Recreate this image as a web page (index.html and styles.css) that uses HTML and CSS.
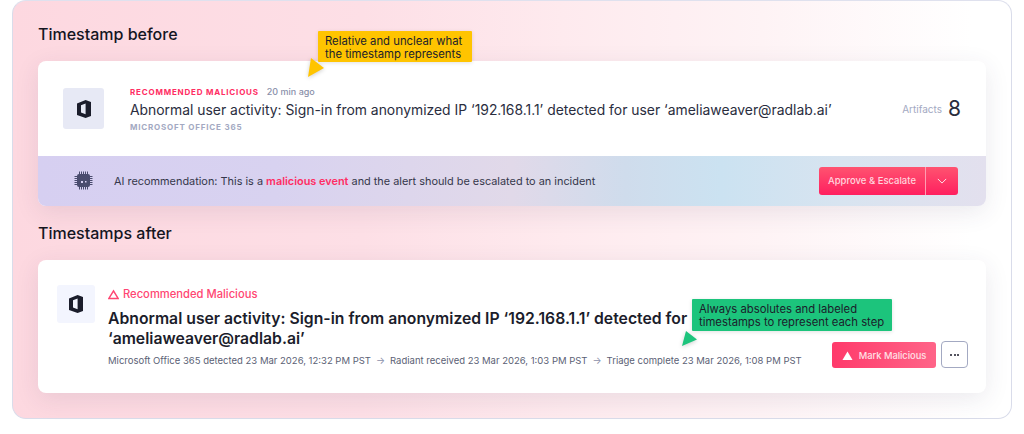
FILE: index.html
```html
<!DOCTYPE html>
<html lang="en">
<head>
    <meta charset="UTF-8">
    <title>Timestamps before and after</title>
    <link rel="stylesheet" href="styles.css">
</head>
<body>
    <div class="panel">
        <h2 class="section-title first">Timestamp before</h2>

        <div class="card">
            <div class="alert-top">
                <div class="logo-box">
                    <svg class="office" viewBox="0 0 14 18"><path fill-rule="evenodd" d="M8.6 0L14 1.9V16.1L8.6 18L0 15V3.4ZM8.6 3.4L4 5.2V12.4L8.6 14.3Z"/></svg>
                </div>
                <div class="alert-text">
                    <div class="status-row">
                        <span class="status-caps">RECOMMENDED MALICIOUS</span>
                        <span class="time-ago">20 min ago</span>
                    </div>
                    <div class="alert-title">Abnormal user activity: Sign-in from anonymized IP ‘192.168.1.1’ detected for user ‘ameliaweaver@radlab.ai’</div>
                    <div class="source-caps">MICROSOFT OFFICE 365</div>
                </div>
                <div class="artifacts">
                    <span class="artifacts-label">Artifacts</span>
                    <span class="artifacts-count">8</span>
                </div>
            </div>
            <div class="ai-strip">
                <svg class="chip" viewBox="0 0 20 20">
                    <rect x="3" y="3" width="13" height="13" rx="2"/>
                    <path class="chip-pins" d="M5.5 0.5V3M7.5 0.5V3M9.5 0.5V3M11.5 0.5V3M13.5 0.5V3M5.5 16V18.5M7.5 16V18.5M9.5 16V18.5M11.5 16V18.5M13.5 16V18.5M0.5 5.5H3M0.5 7.5H3M0.5 9.5H3M0.5 11.5H3M0.5 13.5H3M16 5.5H18.5M16 7.5H18.5M16 9.5H18.5M16 11.5H18.5M16 13.5H18.5"/>
                    <rect class="chip-dot" x="7" y="10" width="2" height="2"/>
                    <rect class="chip-dot" x="11" y="10" width="1.5" height="1.5"/>
                </svg>
                <p class="ai-text">AI recommendation: This is a <span class="hot">malicious event</span> and the alert should be escalated to an incident</p>
                <div class="split-button">
                    <span class="split-label">Approve &amp; Escalate</span>
                    <span class="split-arrow">
                        <svg class="chevron" viewBox="0 0 12 7"><path d="M1 1L6 6L11 1"/></svg>
                    </span>
                </div>
            </div>
        </div>

        <h2 class="section-title second">Timestamps after</h2>

        <div class="card card-after">
            <div class="logo-box small">
                <svg class="office" viewBox="0 0 14 18"><path fill-rule="evenodd" d="M8.6 0L14 1.9V16.1L8.6 18L0 15V3.4ZM8.6 3.4L4 5.2V12.4L8.6 14.3Z"/></svg>
            </div>
            <div class="after-text">
                <div class="after-status">
                    <svg class="warn" viewBox="0 0 12 11"><path d="M6 1.5L11 9.8H1Z"/></svg>
                    Recommended Malicious
                </div>
                <div class="after-title">Abnormal user activity: Sign-in from anonymized IP ‘192.168.1.1’ detected for ‘ameliaweaver@radlab.ai’</div>
                <div class="steps">
                    <span>Microsoft Office 365 detected 23 Mar 2026, 12:32 PM PST</span>
                    <span class="step-arrow">→</span>
                    <span>Radiant received 23 Mar 2026, 1:03 PM PST</span>
                    <span class="step-arrow">→</span>
                    <span>Triage complete 23 Mar 2026, 1:08 PM PST</span>
                </div>
            </div>
            <div class="actions">
                <div class="mark-button">
                    <svg class="warn-solid" viewBox="0 0 12 11"><path d="M6 1L11.5 10.5H0.5Z"/></svg>
                    Mark Malicious
                </div>
                <div class="more-button">
                    <i></i><i></i><i></i>
                </div>
            </div>
        </div>

        <!-- annotations on top of the cards -->
        <div class="note note-yellow">Relative and unclear what<br>the timestamp represents</div>
        <svg class="pointer pointer-yellow" viewBox="0 0 18 21"><path d="M4 1L17 11L1 20Z"/></svg>
        <div class="note note-green">Always absolutes and labeled<br>timestamps to represent each step</div>
        <svg class="pointer pointer-green" viewBox="0 0 18 18"><path d="M5 1L16 9.5L1 16Z"/></svg>
    </div>
</body>
</html>
```

FILE: styles.css
```css
:root {
    --dark: #1f2233;
    --hot: #ff2d63;
    --muted: #8a90aa;
    --light-muted: #a3a9c2;
}

* {
    margin: 0;
    padding: 0;
    box-sizing: border-box;
}

body {
    width: 1024px;
    height: 434px;
    overflow: hidden;
    background-color: white;
    font-family: 'Inter', sans-serif;
    color: var(--dark);
}

.panel {
    position: relative;
    width: 1000px;
    height: 419px;
    margin-left: 12px;
    padding: 0 25px 0 25px;
    border: 1px solid #d9dcea;
    border-top-color: #dfe1ee;
    border-radius: 14px;
    background: linear-gradient(90deg, #fdd8e0 0%, #fddfe6 35%, #feeaee 55%, #fef3f5 75%, #ffffff 96%);
}

.section-title {
    font-size: 16px;
    line-height: 20px;
    font-weight: 500;
    color: #14151f;
}

.section-title.first {
    padding-top: 23px;
    margin-bottom: 17px;
}

.section-title.second {
    margin-top: 17px;
    margin-bottom: 17px;
}

.card {
    background-color: white;
    border-radius: 8px;
    overflow: hidden;
    box-shadow: 0 6px 24px rgba(60, 50, 90, 0.1);
}

.alert-top {
    display: flex;
    align-items: center;
    height: 95px;
    padding: 0 25px;
}

.logo-box {
    width: 41px;
    height: 41px;
    flex-shrink: 0;
    display: flex;
    justify-content: center;
    align-items: center;
    border-radius: 3px;
    background-color: #e7e9f5;
    margin-right: 26px;
}

.logo-box.small {
    width: 38px;
    height: 38px;
    background-color: #f3f5fe;
    margin-right: 13px;
}

.office {
    width: 14px;
    height: 18px;
    fill: #1b1d2b;
}

.alert-text {
    flex: 1;
    min-width: 0;
}

.status-row {
    display: flex;
    align-items: center;
    gap: 8px;
    height: 14px;
}

.status-caps {
    font-size: 8px;
    font-weight: 700;
    letter-spacing: 0.8px;
    color: var(--hot);
}

.time-ago {
    font-size: 9px;
    font-weight: 500;
    color: var(--muted);
}

.alert-title {
    font-size: 13.9px;
    line-height: 22px;
    white-space: nowrap;
    color: #2a2d3e;
}

.source-caps {
    font-size: 8px;
    line-height: 12px;
    font-weight: 700;
    letter-spacing: 0.8px;
    color: var(--light-muted);
}

.artifacts {
    display: flex;
    align-items: center;
    gap: 6px;
}

.artifacts-label {
    font-size: 10px;
    color: var(--light-muted);
}

.artifacts-count {
    font-size: 21px;
    color: #2a2d3e;
}

.ai-strip {
    display: flex;
    align-items: center;
    height: 50px;
    padding: 0 28px 0 36px;
    background: linear-gradient(90deg, #d6cff1 0%, #d8d2f0 25%, #e1d9e9 50%, #cfdcec 62%, #cbe2f1 72%, #d8e4f0 85%, #e3e0ee 100%);
}

.chip {
    width: 20px;
    height: 20px;
    margin-right: 20px;
    fill: #4a4c6e;
}

.chip-pins {
    fill: none;
    stroke: #4a4c6e;
    stroke-width: 1;
}

.chip .chip-dot {
    fill: #d6cff1;
}

.ai-text {
    flex: 1;
    font-size: 10.9px;
    color: #35374b;
}

.hot {
    color: var(--hot);
    font-weight: 600;
}

.split-button {
    display: flex;
    height: 28px;
    width: 139px;
    border-radius: 3px;
    color: #ffd5de;
    background: linear-gradient(180deg, #ff5370 0%, #ff1f5f 100%);
}

.split-label {
    width: 107px;
    font-size: 9.5px;
    font-weight: 500;
    line-height: 28px;
    text-align: center;
    border-right: 1px solid #ff9db2;
}

.split-arrow {
    flex: 1;
    display: flex;
    justify-content: center;
    align-items: center;
}

.chevron {
    width: 10px;
    height: 6px;
    fill: none;
    stroke: #ffe3e9;
    stroke-width: 1.2;
}

.card-after {
    display: flex;
    height: 133px;
    padding: 25px 18px 25px 19px;
}

.after-text {
    width: 700px;
    flex-shrink: 0;
}

.after-status {
    display: flex;
    align-items: center;
    gap: 4px;
    height: 18px;
    font-size: 11.2px;
    font-weight: 500;
    color: #ff4672;
}

.warn {
    width: 11px;
    height: 11px;
    fill: none;
    stroke: #ff4672;
    stroke-width: 1.6;
}

.after-title {
    max-width: 590px;
    margin-top: 6px;
    font-size: 15.75px;
    line-height: 20px;
    font-weight: 600;
    color: #1b1d2b;
}

.steps {
    display: flex;
    gap: 5px;
    margin-top: 5px;
    font-size: 9.5px;
    line-height: 14px;
    white-space: nowrap;
    color: #5b5f75;
}

.step-arrow {
    color: #8a90aa;
}

.actions {
    flex: 1;
    display: flex;
    align-items: flex-end;
    justify-content: flex-end;
    gap: 5px;
}

.mark-button {
    width: 104px;
    height: 26px;
    display: flex;
    justify-content: center;
    align-items: center;
    gap: 6px;
    border-radius: 3px;
    font-size: 9.3px;
    font-weight: 500;
    color: #ffe0e6;
    background: linear-gradient(90deg, #ff3a6b 0%, #ff6488 100%);
}

.warn-solid {
    width: 11px;
    height: 11px;
    fill: white;
}

.more-button {
    width: 27px;
    height: 27px;
    display: flex;
    justify-content: center;
    align-items: center;
    gap: 1.5px;
    border: 1px solid #a3a9c2;
    border-radius: 4px;
    background-color: white;
}

.more-button i {
    width: 2px;
    height: 2px;
    border-radius: 50%;
    background-color: #1b1d2b;
}

.note {
    position: absolute;
    font-size: 11.3px;
    line-height: 13px;
    white-space: nowrap;
    color: #1b1d2b;
    border-radius: 1px;
    box-shadow: 0 1px 4px rgba(0, 0, 0, 0.12);
}

.note-yellow {
    left: 305px;
    top: 30px;
    padding: 4px 10px 1px 7px;
    background-color: #ffc400;
}

.note-green {
    left: 679px;
    top: 298px;
    padding: 4px 8px 2px 7px;
    background-color: #1cc47c;
}

.pointer {
    position: absolute;
    filter: drop-shadow(0 1px 2px rgba(0, 0, 0, 0.2));
}

.pointer-yellow {
    left: 294px;
    top: 56px;
    width: 18px;
    height: 21px;
    fill: #ffc400;
}

.pointer-green {
    left: 668px;
    top: 329px;
    width: 18px;
    height: 18px;
    fill: #1cc47c;
}
```
